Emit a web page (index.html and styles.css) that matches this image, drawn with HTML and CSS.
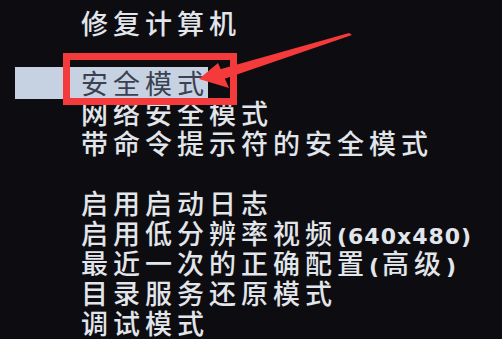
FILE: index.html
```html
<!DOCTYPE html>
<html lang="zh-CN">
<head>
    <meta charset="UTF-8">
    <meta name="viewport" content="width=device-width, initial-scale=1.0">
    <title>高级启动选项</title>
    <link rel="stylesheet" href="styles.css">
</head>
<body>
    <div class="screen">
        <ul class="menu">
            <li class="item">修复计算机</li>
            <li class="item blank"></li>
            <li class="item selected"><span>安全模式</span></li>
            <li class="item">网络安全模式</li>
            <li class="item">带命令提示符的安全模式</li>
            <li class="item blank"></li>
            <li class="item">启用启动日志</li>
            <li class="item">启用低分辨率视频<span class="latin">(640x480)</span></li>
            <li class="item">最近一次的正确配置<span class="paren">(</span>高级<span class="paren">)</span></li>
            <li class="item">目录服务还原模式</li>
            <li class="item">调试模式</li>
        </ul>

        <!-- annotation drawn over the screenshot -->
        <div class="mark-box"></div>
        <svg class="mark-arrow" width="502" height="339" viewBox="0 0 502 339">
            <polygon points="214,71 349,33 352,35 221,80" fill="#f43a3a"/>
            <polygon points="199,79 218,63 229,88" fill="#f43a3a"/>
        </svg>
    </div>
</body>
</html>
```

FILE: styles.css
```css
/* Global styles */
body {
    margin: 0;
    padding: 0;
    background-color: #0d0d11;
}

.screen {
    position: relative;
    width: 502px;
    height: 339px;
    overflow: hidden;
    background-color: #0d0d11;
}

.menu {
    list-style: none;
    margin: 0;
    padding: 8px 0 0 0;
    font-family: "Noto Sans CJK SC", "Noto Sans", sans-serif;
    font-size: 27px;
    font-weight: 500;
    letter-spacing: 5px;
    color: #e2e5ea;
}

.item {
    height: 30px;
    line-height: 30px;
    padding-left: 81px;
    white-space: nowrap;
}

.item .latin,
.item .paren {
    font-family: "DejaVu Sans", sans-serif;
    font-size: 22px;
    font-weight: bold;
    letter-spacing: 1px;
}

.item .paren {
    letter-spacing: 3px;
}

.item.selected {
    padding-left: 15px;
}

.item.selected span {
    display: inline-block;
    height: 32px;
    line-height: 32px;
    margin-top: -2px;
    width: 127px;
    padding-left: 66px;
    background-color: #c6d2e2;
    color: #3b4150;
    font-weight: 400;
}

/* Red annotation */
.mark-box {
    position: absolute;
    left: 63px;
    top: 53px;
    width: 160px;
    height: 38px;
    border: 7px solid #f43a3a;
}

.mark-arrow {
    position: absolute;
    left: 0;
    top: 0;
}
```
